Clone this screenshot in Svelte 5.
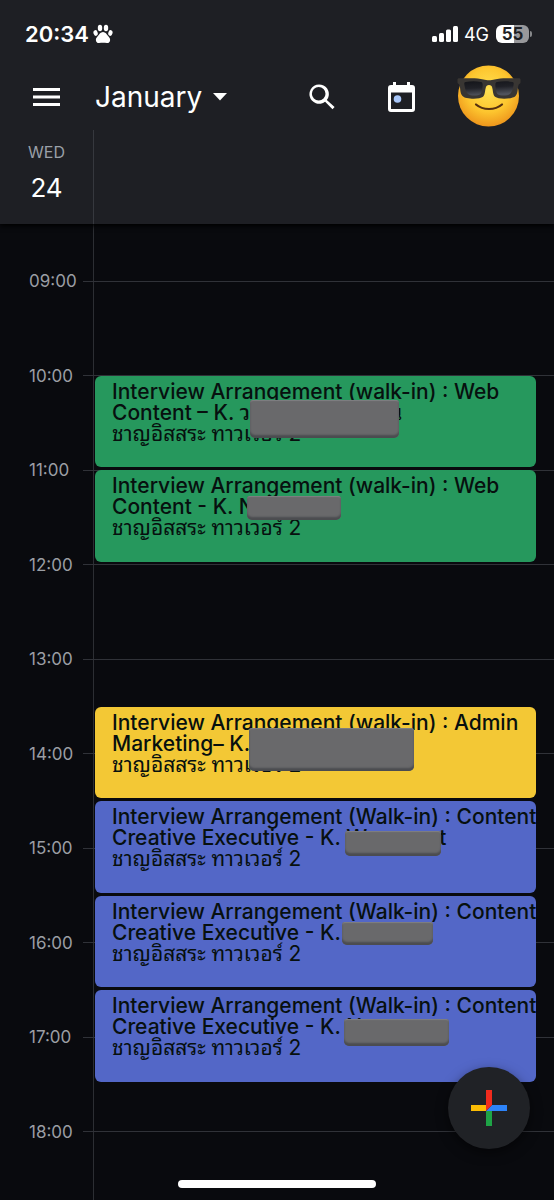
<script lang="ts">
	type Mask = { x: number; y: number; w: number; h: number };
	type CalendarEvent = {
		row: number;
		color: 'green' | 'yellow' | 'blue';
		title: string;
		detail: string;
		tail?: string;
		gap?: number;
		place: string;
		mask: Mask;
	};

	// one grid row is half an hour, row 1 starts at 08:30
	const hours = Array.from({ length: 10 }, (_, i) => ({
		row: i * 2 + 2,
		label: `${String(i + 9).padStart(2, '0')}:00`
	}));

	const place = 'ชาญอิสสระ ทาวเวอร์ 2';

	const events: CalendarEvent[] = [
		{
			row: 4,
			color: 'green',
			title: 'Interview Arrangement (walk-in) : Web',
			detail: 'Content – K. ว',
			tail: 'น',
			gap: 139,
			place,
			mask: { x: 155, y: 24, w: 149, h: 38 }
		},
		{
			row: 6,
			color: 'green',
			title: 'Interview Arrangement (walk-in) : Web',
			detail: 'Content - K. N',
			place,
			mask: { x: 152, y: 26, w: 94, h: 24 }
		},
		{
			row: 11,
			color: 'yellow',
			title: 'Interview Arrangement (walk-in) : Admin',
			detail: 'Marketing– K.',
			place,
			mask: { x: 154, y: 21, w: 165, h: 43 }
		},
		{
			row: 13,
			color: 'blue',
			title: 'Interview Arrangement (Walk-in) : Content',
			detail: 'Creative Executive - K. W',
			tail: 't',
			gap: 72,
			place,
			mask: { x: 250, y: 30, w: 96, h: 25 }
		},
		{
			row: 15,
			color: 'blue',
			title: 'Interview Arrangement (Walk-in) : Content',
			detail: 'Creative Executive - K.',
			place,
			mask: { x: 247, y: 26, w: 91, h: 23 }
		},
		{
			row: 17,
			color: 'blue',
			title: 'Interview Arrangement (Walk-in) : Content',
			detail: 'Creative Executive - K. N',
			place,
			mask: { x: 249, y: 29, w: 105, h: 27 }
		}
	];
</script>

<div class="app">
	<header>
		<div class="status">
			<span class="clock">20:34</span>
			<svg class="paw" viewBox="0 0 20 20" width="20" height="20" aria-hidden="true">
				<ellipse cx="7" cy="4" rx="2.2" ry="3.2" />
				<ellipse cx="13" cy="4" rx="2.2" ry="3.2" />
				<ellipse cx="2.6" cy="9" rx="2.1" ry="2.9" transform="rotate(-15 2.6 9)" />
				<ellipse cx="17.4" cy="9" rx="2.1" ry="2.9" transform="rotate(15 17.4 9)" />
				<path d="M10 7.900c-2.500 0-3.700 2.300-5.100 4-1.200 1.400-2.200 2.600-2 4.300.2 1.900 1.500 3 3.200 2.800 1.400-.2 2.500-.3 3.900-.3s2.500.1 3.900.3c1.700.2 3-.9 3.200-2.800.2-1.700-.8-2.900-2-4.300-1.400-1.700-2.600-4-5.100-4z" />
			</svg>
			<svg class="signal" viewBox="0 0 26 16" width="26" height="16" aria-hidden="true">
				<rect x="0" y="10" width="5" height="6" rx="1.5" />
				<rect x="7" y="7" width="5" height="9" rx="1.5" />
				<rect x="14" y="3.5" width="5" height="12.5" rx="1.5" />
				<rect x="21" y="0" width="5" height="16" rx="1.5" />
			</svg>
			<span class="network">4G</span>
			<span class="battery">55</span>
			<i class="battery-tip"></i>
		</div>

		<div class="toolbar">
			<button class="menu" type="button" aria-label="Menu">
				<svg viewBox="0 0 27 18" width="27" height="18"><path d="M0 0h27v3H0zM0 7.5h27v3H0zM0 15h27v3H0z" /></svg>
			</button>
			<button class="month" type="button">
				January
				<svg viewBox="0 0 14 8" width="14" height="8" aria-hidden="true"><path d="M0 0h14L7 7.5z" /></svg>
			</button>
			<button class="search" type="button" aria-label="Search">
				<svg viewBox="0 0 26 26" width="26" height="26">
					<path d="M17.800 16.100a9.700 9.700 0 1 0-1.700 1.700l7.400 7.500 2.100-2.200zM9.700 16.500a6.800 6.800 0 1 1 0-13.600 6.800 6.800 0 0 1 0 13.600z" fill-rule="evenodd" />
				</svg>
			</button>
			<button class="today" type="button" aria-label="Jump to today">
				<svg viewBox="0 0 27 31" width="27" height="31">
					<path fill-rule="evenodd" d="M5 0h3v3h11V0h3v3h2a3 3 0 0 1 3 3v21a3 3 0 0 1-3 3H3a3 3 0 0 1-3-3V6a3 3 0 0 1 3-3h2zM3 10.500V27h21V10.500z" />
					<circle cx="9.5" cy="17" r="3.8" fill="#a9c7fa" />
				</svg>
			</button>
			<button class="avatar" type="button" aria-label="Account">
				<svg viewBox="0 0 64 64" width="64" height="64">
					<defs>
						<radialGradient id="face" cx="50%" cy="40%" r="60%">
							<stop offset="0" stop-color="#ffe152" />
							<stop offset=".6" stop-color="#fdc62f" />
							<stop offset="1" stop-color="#ee961c" />
						</radialGradient>
						<linearGradient id="lens" x1="0" y1="0" x2="0.2" y2="1">
							<stop offset="0" stop-color="#14151a" />
							<stop offset=".5" stop-color="#202127" />
							<stop offset="1" stop-color="#50535c" />
						</linearGradient>
					</defs>
					<circle cx="31.5" cy="31" r="30.5" fill="url(#face)" />
					<path d="M.5 14.500c0-1 .8-1.300 2-1.300 9 .3 17-.8 24 1.300 3 1 8 1 11 0 7-2.100 15-1 24-1.300 1.200 0 2 .3 2 1.300v3c0 1-1.500 1.500-2 2.500-1 3-.3 8-3 11-2.500 3.200-17 3.700-20.500.8-2.600-2.500-1.800-8.300-3.500-10.800-1.200-1.500-3.800-1.500-5 0-1.700 2.500-.9 8.300-3.500 10.800-3.500 2.900-18 2.400-20.500-.8-2.700-3-2-8-3-11-.5-1-2-1.500-2-2.500z" fill="#393633" />
					<path d="M8.500 17c5-1 11-1 15.500 0 1.500.4 1.800 1.500 1.600 4-.3 3.500-.6 6.500-2 8-2.500 2-10 2-12.600 0C8.800 27 7.600 22 7.300 19c-.1-1.200.2-1.800 1.200-2zM55.500 17c-5-1-11-1-15.500 0-1.500.4-1.800 1.500-1.600 4 .3 3.500.6 6.500 2 8 2.500 2 10 2 12.600 0 2.200-2 3.400-7 3.700-10 .1-1.200-.2-1.800-1.200-2z" fill="url(#lens)" />
					<path d="M19 39.500c7 6 19 6 26 0" fill="none" stroke="#553010" stroke-width="2.2" stroke-linecap="round" />
				</svg>
			</button>
		</div>

		<div class="day">
			<div class="date">
				<span class="weekday">WED</span>
				<span class="number">24</span>
			</div>
		</div>
	</header>

	<main class="schedule">
		{#each hours as hour}
			<div class="hour" style:grid-row={hour.row}>
				<time>{hour.label}</time>
			</div>
		{/each}

		{#each events as event}
			<article class="event {event.color}" style:grid-row="{event.row} / span 2">
				<h2>
					{event.title}<br />
					{event.detail}{#if event.tail}<span class="tail" style:margin-left="{event.gap}px">{event.tail}</span>{/if}
				</h2>
				<p>{event.place}</p>
				<span
					class="mask"
					style:left="{event.mask.x}px"
					style:top="{event.mask.y}px"
					style:width="{event.mask.w}px"
					style:height="{event.mask.h}px"
				></span>
			</article>
		{/each}
	</main>

	<button class="add" type="button" aria-label="Create event">
		<svg viewBox="0 0 36 36" width="36" height="36">
			<path d="M0 15h15v6H0z" fill="#fbbc04" />
			<path d="M15 21h6v15h-6z" fill="#1ea446" />
			<path d="M36 15v6H15l6-6z" fill="#2d83f8" />
			<path d="M15 0h6v15l-6 6z" fill="#f02b1d" />
		</svg>
	</button>
	<div class="home-indicator"></div>
</div>

<style>
	:global(body) {
		margin: 0;
		background: #090a0e;
	}

	.app {
		position: relative;
		display: flex;
		flex-direction: column;
		min-height: 100vh;
		font-family: Inter, 'Noto Sans Thai Looped', Thonburi, Loma, Garuda, Waree, 'Noto Sans', sans-serif;
		color: #fff;
		background: #090a0e;
	}

	button {
		display: flex;
		align-items: center;
		padding: 0;
		border: 0;
		background: none;
		color: inherit;
		font: inherit;
		cursor: pointer;
	}

	svg {
		display: block;
		flex: none;
		fill: #fff;
	}

	header {
		position: relative;
		z-index: 1;
		background: #1e1f24;
		box-shadow: 0 2px 5px #000;
	}

	/* Status bar */
	.status {
		display: flex;
		align-items: center;
		height: 64px;
		padding: 4px 22px 0 25px;
		box-sizing: border-box;
	}

	.clock {
		font-size: 22px;
		font-weight: 600;
	}

	.paw {
		margin-left: 4px;
	}

	.signal {
		margin-left: auto;
	}

	.network {
		margin-left: 6px;
		font-size: 18px;
	}

	.battery {
		margin-left: 7px;
		width: 33px;
		height: 18px;
		border-radius: 6px;
		background: linear-gradient(90deg, #fff 55%, #98989b 55%);
		color: #1e1f24;
		font-size: 17px;
		font-weight: 700;
		line-height: 18px;
		text-align: center;
	}

	.battery-tip {
		width: 2px;
		height: 6px;
		margin-left: 1px;
		border-radius: 0 2px 2px 0;
		background: #87888b;
	}

	/* Toolbar */
	.toolbar {
		display: flex;
		align-items: center;
		height: 66px;
		padding: 0 33px;
	}

	.month {
		gap: 11px;
		margin-left: 35px;
		font-size: 28px;
	}

	.search {
		margin-left: auto;
	}

	.today {
		margin-left: 53px;
	}

	.avatar {
		margin-left: 42px;
	}

	/* Day strip */
	.day {
		display: flex;
		height: 94px;
	}

	.date {
		display: flex;
		flex-direction: column;
		align-items: center;
		gap: 8px;
		width: 94px;
		padding-top: 12px;
		border-right: 1px solid #36383e;
		box-sizing: border-box;
	}

	.weekday {
		color: #9aa0a8;
		font-size: 16px;
		line-height: 20px;
	}

	.number {
		font-size: 26px;
		line-height: 36px;
	}

	/* Hours and events */
	.schedule {
		flex: 1;
		display: grid;
		grid-template-columns: 95px 1fr;
		grid-template-rows: repeat(20, minmax(46px, 1fr));
		padding: 10px 0 21px;
		background: linear-gradient(#2c2e33, #2c2e33) 93px 0 / 1px 100% no-repeat;
	}

	.hour {
		grid-column: 1 / -1;
		display: flex;
		align-items: center;
		height: 20px;
		margin-top: -10px;
		padding-left: 29px;
	}

	.hour time {
		width: 54px;
		color: #9b9ea4;
		font-size: 17px;
		line-height: 20px;
	}

	.hour::after {
		content: '';
		flex: 1;
		height: 1px;
		background: #303238;
	}

	.event {
		position: relative;
		grid-column: 2;
		margin: 0 18px 3px 0;
		padding: 5px 0 0 17px;
		border-radius: 6px;
		color: #07100f;
		white-space: nowrap;
	}

	.green {
		background: #26985d;
	}

	.yellow {
		background: #f3c835;
	}

	.blue {
		background: #5367c7;
	}

	h2,
	p {
		margin: 0;
		font-size: 21px;
		line-height: 21px;
	}

	h2 {
		font-weight: 500;
	}

	.mask {
		position: absolute;
		border-radius: 3px 3px 5px 5px;
		background: #69696b;
		box-shadow: inset 0 -3px 2px #4b4c50, inset 0 1px 1px #808083;
	}

	.add {
		position: absolute;
		right: 24px;
		bottom: 51px;
		z-index: 1;
		justify-content: center;
		width: 82px;
		height: 82px;
		border-radius: 50%;
		background: #202226;
		box-shadow: 0 4px 12px rgba(0, 0, 0, 0.5);
	}

	.home-indicator {
		position: absolute;
		bottom: 12px;
		left: 50%;
		width: 198px;
		height: 8px;
		margin-left: -99px;
		border-radius: 4px;
		background: #fff;
	}
</style>
